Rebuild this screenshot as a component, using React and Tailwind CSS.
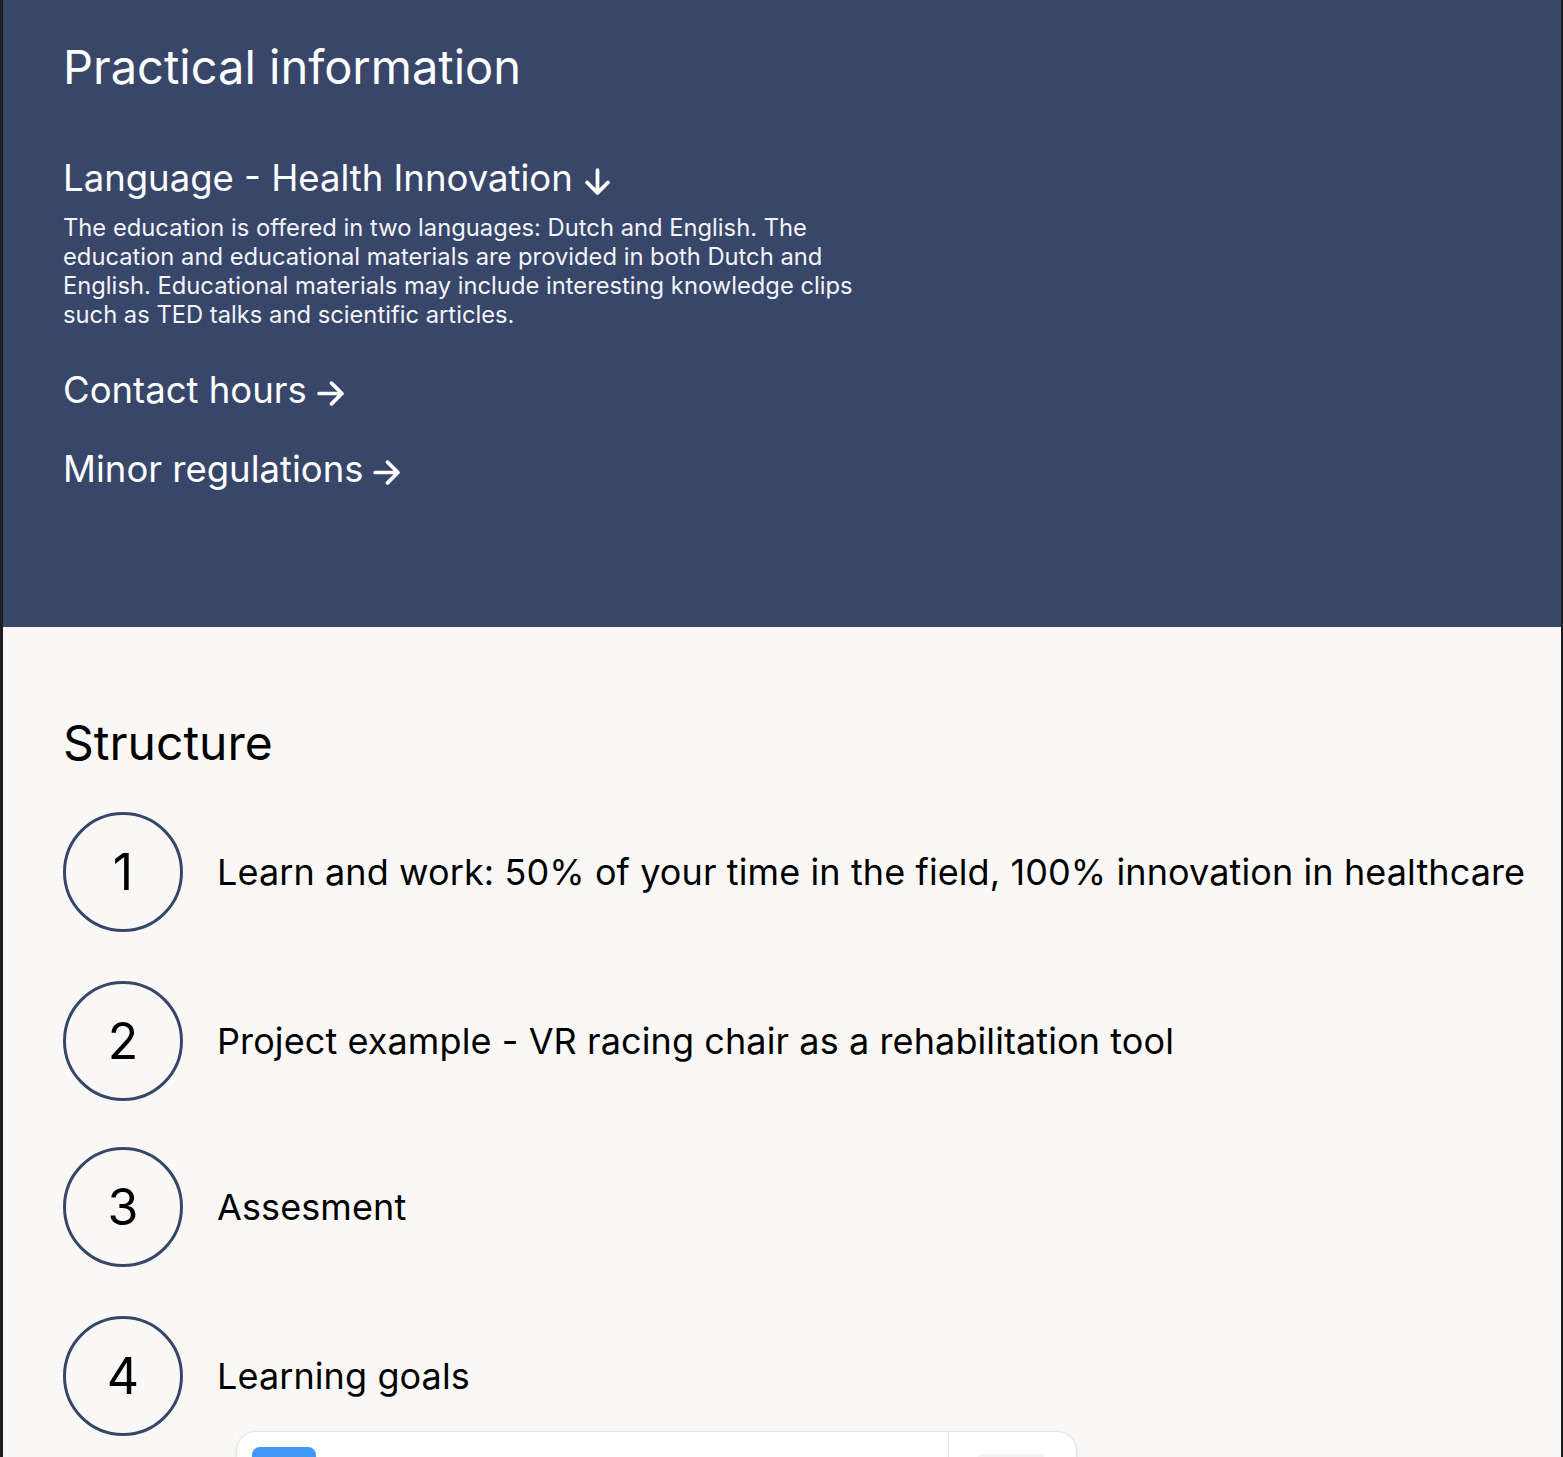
const steps = [
  { n: 1, text: "Learn and work: 50% of your time in the field, 100% innovation in healthcare", mt: "mt-[40px]" },
  { n: 2, text: "Project example - VR racing chair as a rehabilitation tool", mt: "mt-[49px]" },
  { n: 3, text: "Assesment", mt: "mt-[46px]" },
  { n: 4, text: "Learning goals", mt: "mt-[49px]" },
];

function ArrowRight() {
  return (
    <svg
      viewBox="0 0 26 24"
      className="inline-block w-[27px] h-[25px] ml-[10px] align-[-3px]"
      fill="none"
      stroke="currentColor"
      strokeWidth="3.6"
      strokeLinecap="round"
      strokeLinejoin="round"
    >
      <path d="M2 12h22M14 2l10 10-10 10" />
    </svg>
  );
}

function ArrowDown() {
  return (
    <svg
      viewBox="0 0 24 26"
      className="inline-block w-[25px] h-[27px] ml-[12px] align-[-4px]"
      fill="none"
      stroke="currentColor"
      strokeWidth="3.6"
      strokeLinecap="round"
      strokeLinejoin="round"
    >
      <path d="M12 2v22M2 14l10 10 10-10" />
    </svg>
  );
}

export default function App() {
  return (
    <div
      className="min-h-[1457px] border-l-[3px] border-r-[2px] border-[#1e1e1e] bg-[#f9f8f6]"
      style={{ fontFamily: "Inter, 'Noto Sans', sans-serif" }}
    >
      {/* PRACTICAL INFO */}
      <section className="bg-[#38466a] text-white pl-[60px] pt-[39px] h-[627px]">
        <h2 className="text-[47px] leading-[56px]">Practical information</h2>

        <h3 className="mt-[61px] text-[36.5px] leading-[44px]">
          Language - Health Innovation
          <ArrowDown />
        </h3>
        <p className="mt-[13px] max-w-[800px] text-[23.75px] leading-[29px] text-[#f3f4f7]">
          The education is offered in two languages: Dutch and English. The
          education and educational materials are provided in both Dutch and
          English. Educational materials may include interesting knowledge clips
          such as TED talks and scientific articles.
        </p>

        <h3 className="mt-[39px] text-[36.5px] leading-[44px]">
          Contact hours
          <ArrowRight />
        </h3>
        <h3 className="mt-[35px] text-[36.5px] leading-[44px]">
          Minor regulations
          <ArrowRight />
        </h3>
      </section>

      {/* STRUCTURE */}
      <section className="pl-[60px] pt-[87px] text-black overflow-hidden h-[830px]">
        <h2 className="text-[48px] leading-[58px]">Structure</h2>

        {steps.map((s) => (
          <div key={s.n} className={`flex items-center gap-[34px] ${s.mt}`}>
            <div className="w-[120px] h-[120px] shrink-0 rounded-full border-[3px] border-[#38466a] flex items-center justify-center text-[50px] leading-none">
              {s.n}
            </div>
            <p className="text-[36px] leading-[44px] tracking-[0.1px] whitespace-nowrap">
              {s.text}
            </p>
          </div>
        ))}

        {/* EMBED CARD */}
        <div className="-mt-[5px] ml-[173px] w-[841px] h-[120px] bg-white rounded-[20px] border border-[#e6e4e1] shadow-sm flex">
          <div className="flex-1 p-[15px]">
            <div className="w-[64px] h-[36px] rounded-[8px] bg-[#3f98f6]"></div>
          </div>
          <div className="w-[128px] border-l border-[#e3e3e3] pt-[22px] pl-[28px]">
            <div className="w-[68px] h-[30px] rounded-[6px] bg-[#f3f3f3]"></div>
          </div>
        </div>
      </section>
    </div>
  );
}
